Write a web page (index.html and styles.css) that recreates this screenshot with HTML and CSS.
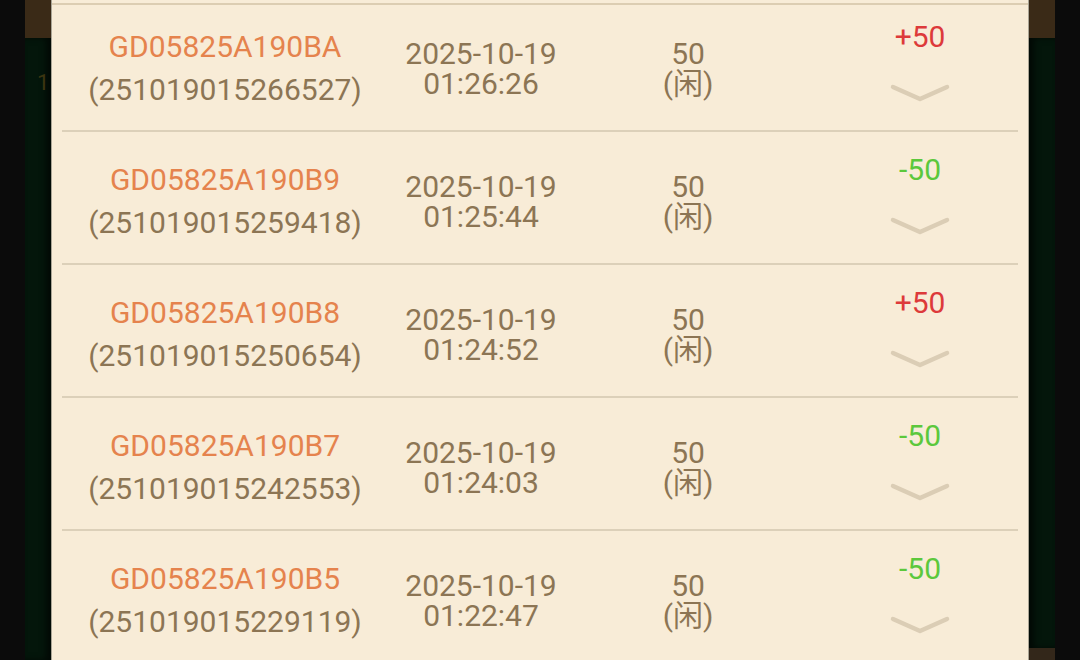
FILE: index.html
```
<!DOCTYPE html>
<html>
<head>
<meta charset="utf-8">
<link rel="stylesheet" href="styles.css">
</head>
<body>
<div class="page">
  <div class="edge"></div>
  <div class="strip">
    <div class="strip-top"></div>
    <div class="strip-body"><span class="ghost">1</span></div>
  </div>
  <div class="panel">
    <div class="top-line"></div>
    <div class="list">
      <div class="row">
        <div class="col c-id"><div class="order">GD05825A190BA</div><div class="serial">(251019015266527)</div></div>
        <div class="col c-time"><div>2025-10-19</div><div>01:26:26</div></div>
        <div class="col c-bet"><div>50</div><div>(闲)</div></div>
        <div class="col c-res"><div class="win">+50</div><svg class="chev" width="62" height="20" viewBox="0 0 62 20"><path d="M4 4 L31 16 L58 4" fill="none" stroke="#dbcdb5" stroke-width="4.5" stroke-linecap="round" stroke-linejoin="round"/></svg></div>
      </div>
      <div class="row">
        <div class="col c-id"><div class="order">GD05825A190B9</div><div class="serial">(251019015259418)</div></div>
        <div class="col c-time"><div>2025-10-19</div><div>01:25:44</div></div>
        <div class="col c-bet"><div>50</div><div>(闲)</div></div>
        <div class="col c-res"><div class="lose">-50</div><svg class="chev" width="62" height="20" viewBox="0 0 62 20"><path d="M4 4 L31 16 L58 4" fill="none" stroke="#dbcdb5" stroke-width="4.5" stroke-linecap="round" stroke-linejoin="round"/></svg></div>
      </div>
      <div class="row">
        <div class="col c-id"><div class="order">GD05825A190B8</div><div class="serial">(251019015250654)</div></div>
        <div class="col c-time"><div>2025-10-19</div><div>01:24:52</div></div>
        <div class="col c-bet"><div>50</div><div>(闲)</div></div>
        <div class="col c-res"><div class="win">+50</div><svg class="chev" width="62" height="20" viewBox="0 0 62 20"><path d="M4 4 L31 16 L58 4" fill="none" stroke="#dbcdb5" stroke-width="4.5" stroke-linecap="round" stroke-linejoin="round"/></svg></div>
      </div>
      <div class="row">
        <div class="col c-id"><div class="order">GD05825A190B7</div><div class="serial">(251019015242553)</div></div>
        <div class="col c-time"><div>2025-10-19</div><div>01:24:03</div></div>
        <div class="col c-bet"><div>50</div><div>(闲)</div></div>
        <div class="col c-res"><div class="lose">-50</div><svg class="chev" width="62" height="20" viewBox="0 0 62 20"><path d="M4 4 L31 16 L58 4" fill="none" stroke="#dbcdb5" stroke-width="4.5" stroke-linecap="round" stroke-linejoin="round"/></svg></div>
      </div>
      <div class="row">
        <div class="col c-id"><div class="order">GD05825A190B5</div><div class="serial">(251019015229119)</div></div>
        <div class="col c-time"><div>2025-10-19</div><div>01:22:47</div></div>
        <div class="col c-bet"><div>50</div><div>(闲)</div></div>
        <div class="col c-res"><div class="lose">-50</div><svg class="chev" width="62" height="20" viewBox="0 0 62 20"><path d="M4 4 L31 16 L58 4" fill="none" stroke="#dbcdb5" stroke-width="4.5" stroke-linecap="round" stroke-linejoin="round"/></svg></div>
      </div>
    </div>
  </div>
  <div class="strip strip-r">
    <div class="strip-top"></div>
    <div class="strip-body"></div>
    <div class="strip-bottom"></div>
  </div>
  <div class="edge"></div>
</div>
</body>
</html>
```
FILE: styles.css
```
html, body {
  margin: 0;
  padding: 0;
  background: #0b0b0b;
  overflow: hidden;
}
.page {
  display: flex;
  width: 1080px;
  height: 660px;
  font-family: Roboto, "Noto Sans CJK SC", sans-serif;
}
.edge {
  width: 25px;
  background: #0b0b0b;
  flex: none;
}
.strip {
  width: 26px;
  flex: none;
  display: flex;
  flex-direction: column;
}
.strip-top {
  height: 38px;
  background: #3a2a17;
}
.strip-body {
  flex: 1;
  background: #04160b;
  padding-top: 32px;
  box-shadow: inset -5px 0 6px rgba(0,0,0,0.6);
}
.strip-r .strip-body {
  box-shadow: inset 5px 0 6px rgba(0,0,0,0.6);
}
.strip-bottom {
  height: 12px;
  background: #33271a;
}
.ghost {
  display: block;
  padding-left: 12px;
  color: #3c3511;
  font-size: 22px;
}
.panel {
  position: relative;
  flex: none;
  background: #f8ecd7;
  border-left: 1px solid #aaa596;
  border-right: 1px solid #aaa596;
  padding: 0 10px;
  box-sizing: border-box;
  width: 978px;
  overflow: hidden;
}
.top-line {
  position: absolute;
  left: 0;
  right: 0;
  top: 3px;
  height: 2px;
  background: #dccdb2;
}
.list {
  margin-top: -1px;
}
.row {
  display: grid;
  grid-template-columns: 326px 186px 228px 1fr;
  height: 131px;
  border-bottom: 2px solid #dcd0b9;
  color: #8c7554;
  font-size: 30px;
  line-height: 30px;
}
.col {
  text-align: center;
}
.c-id {
  padding-top: 33px;
}
.order {
  color: #e5834d;
}
.serial {
  margin-top: 13px;
}
.c-time, .c-bet {
  padding-top: 40px;
}
.c-res {
  padding-left: 20px;
  padding-top: 23px;
  display: flex;
  flex-direction: column;
  align-items: center;
}
.win {
  color: #dd3a3a;
}
.lose {
  color: #5cc83c;
}
.chev {
  margin-top: 31px;
  display: block;
}
```
